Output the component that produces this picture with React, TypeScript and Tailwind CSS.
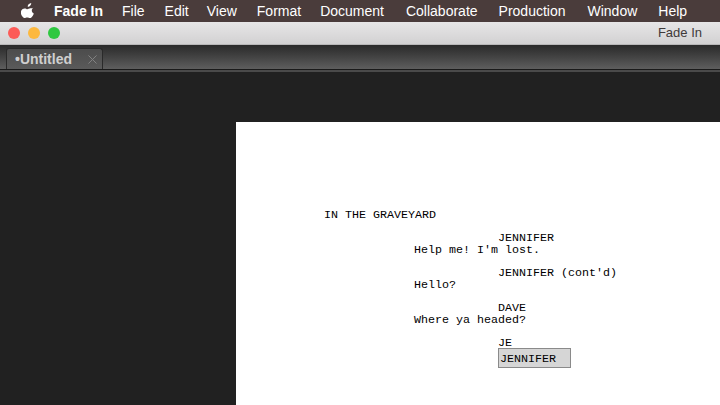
import { FC } from "react";

const menus = [
  { label: "File", cls: "" },
  { label: "Edit", cls: "ml-[20px]" },
  { label: "View", cls: "ml-[18px]" },
  { label: "Format", cls: "ml-[20px]" },
  { label: "Document", cls: "ml-[19px]" },
  { label: "Collaborate", cls: "ml-[22px]" },
  { label: "Production", cls: "ml-[21px]" },
  { label: "Window", cls: "ml-[22px]" },
  { label: "Help", cls: "ml-[21px]" },
];

const ScriptLine: FC<{ text: string; indent: string; gap?: boolean }> = ({ text, indent, gap }) => (
  <div className={`h-[11.67px] whitespace-pre leading-[11.67px] ${indent} ${gap ? "mt-[11.67px]" : ""}`}>{text}</div>
);

const App: FC = () => {
  return (
    <div className="flex h-[405px] w-[720px] flex-col overflow-hidden bg-[#212121] font-['Liberation_Sans',sans-serif]">
      <div className="flex h-[22px] shrink-0 items-center bg-[#4a3c3b] text-[14px] text-white">
        <svg viewBox="0 0 170 200" className="mb-[2px] ml-[21px] h-[17px] w-[14px]" fill="#fff">
          <path d="M150 67c-11 7-19 19-19 33 0 16 10 30 25 36-3 10-8 20-15 30-9 13-19 26-33 26-13 0-17-8-33-8-15 0-21 8-33 8-13 0-22-12-32-27C-2 146-6 120 4 100c8-15 23-25 39-25 14 0 25 9 34 9 8 0 22-10 38-10 6 0 24 1 35-7z" />
          <path d="M113 40c7-8 12-20 11-32-11 1-23 7-31 16-7 8-13 19-11 31 12 1 24-6 31-15z" />
        </svg>
        <span className="ml-[19px] font-bold">Fade In</span>
        <div className="ml-[19px] flex">
          {menus.map((m) => (
            <span key={m.label} className={m.cls}>
              {m.label}
            </span>
          ))}
        </div>
      </div>

      <div className="flex h-[22px] shrink-0 items-center bg-gradient-to-b from-[#e7e6e7] to-[#d2d1d2] pl-[8px]">
        <div className="flex gap-[8px]">
          <div className="h-[12px] w-[12px] rounded-full bg-[#fc5b57]" />
          <div className="h-[12px] w-[12px] rounded-full bg-[#fdb83e]" />
          <div className="h-[12px] w-[12px] rounded-full bg-[#2fc840]" />
        </div>
        <span className="ml-auto mr-[18px] text-[13px] text-[#3f3a3a]">Fade In</span>
      </div>

      <div className="flex h-[26px] shrink-0 items-end border-b border-[#1a1a1a] bg-gradient-to-b from-[#282828] to-[#5e5e5e] pl-[6px] shadow-[inset_0_1px_0_#b8b7b8]">
        <div className="flex h-[21px] w-[97px] items-center rounded-t-[3px] border-x border-t border-[#2a2a2a] bg-gradient-to-b from-[#4c4c4c] to-[#5a5a5a] pl-[8px] text-[14px] font-bold text-[#cfcfcf]">
          <span>•Untitled</span>
          <svg viewBox="0 0 10 10" className="ml-[16px] h-[9px] w-[9px]" stroke="#838383" strokeWidth="1.1">
            <path d="M0.5 0.5l9 9M9.5 0.5l-9 9" />
          </svg>
        </div>
      </div>

      <div className="h-[2px] shrink-0 bg-[#4a4a4a]" />

      <div className="flex flex-1 flex-col pl-[236px] pt-[50px]">
        <div className="flex-1 bg-white pt-[88px] font-['Liberation_Mono',monospace] text-[11.67px] text-black">
          <ScriptLine text="IN THE GRAVEYARD" indent="ml-[88px]" />
          <ScriptLine text="JENNIFER" indent="ml-[262px]" gap />
          <ScriptLine text="Help me! I'm lost." indent="ml-[178px]" />
          <ScriptLine text="JENNIFER (cont'd)" indent="ml-[262px]" gap />
          <ScriptLine text="Hello?" indent="ml-[178px]" />
          <ScriptLine text="DAVE" indent="ml-[262px]" gap />
          <ScriptLine text="Where ya headed?" indent="ml-[178px]" />
          <ScriptLine text="JE" indent="ml-[262px]" gap />
          <div className="ml-[262px] -mt-[2px] flex h-[20px] w-[73px] items-center border border-[#8a8a8a] bg-[#d6d6d6] pl-[1px] pt-[3px]">
            JENNIFER
          </div>
        </div>
      </div>
    </div>
  );
};

export default App;
